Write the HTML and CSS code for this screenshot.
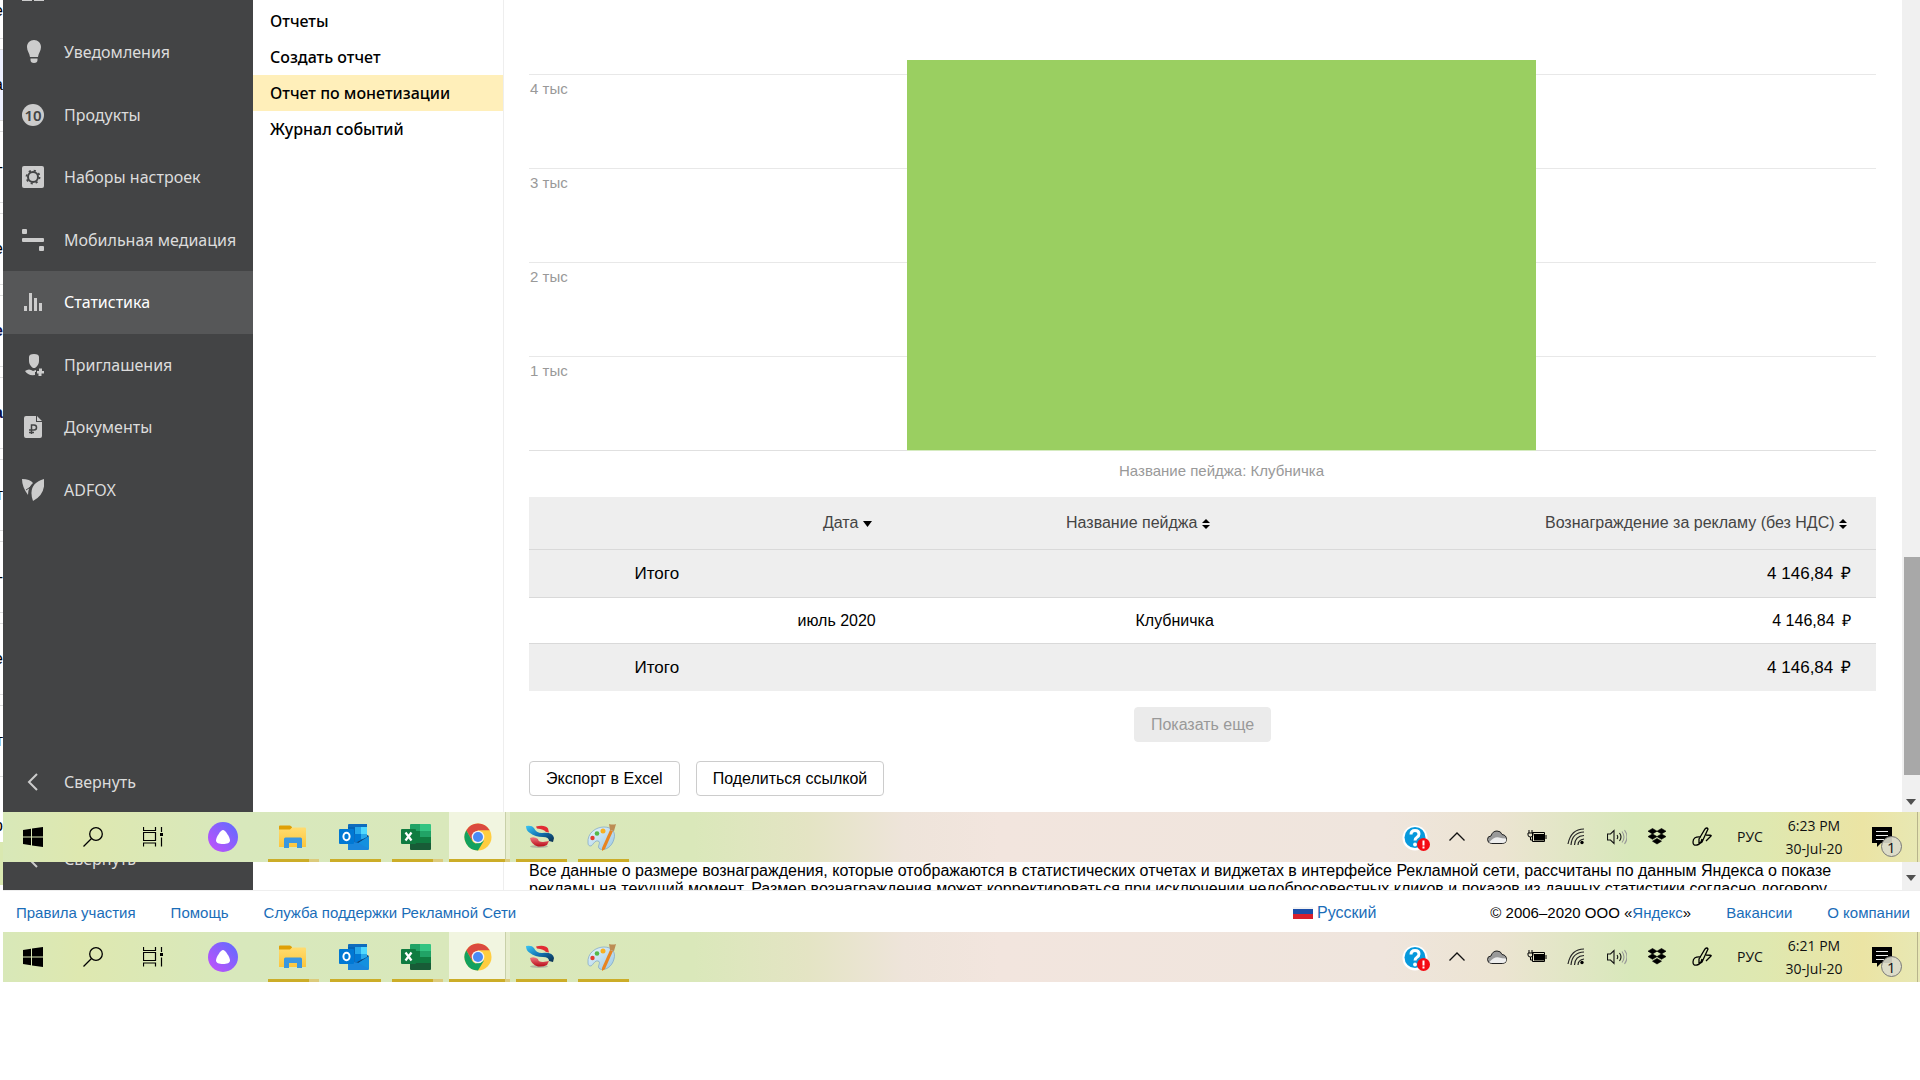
FILE: index.html
```html
<!DOCTYPE html>
<html lang="ru">
<head>
<meta charset="utf-8">
<title>Отчет по монетизации</title>
<link rel="stylesheet" href="styles.css">
</head>
<body>
<svg class="sprite" aria-hidden="true">
  <defs>
    <linearGradient id="g-alice" x1="0" y1="1" x2="1" y2="0"><stop offset="0" stop-color="#c750fa"/><stop offset="1" stop-color="#5b6cff"/></linearGradient>
    <linearGradient id="g-folder" x1="0" y1="0" x2="0" y2="1"><stop offset="0" stop-color="#ffdc70"/><stop offset="1" stop-color="#fcc63c"/></linearGradient>
    <linearGradient id="g-blue" x1="0" y1="0" x2="1" y2="1"><stop offset="0" stop-color="#3cc8f4"/><stop offset=".5" stop-color="#1272b4"/><stop offset="1" stop-color="#0a2c4a"/></linearGradient>
    <linearGradient id="g-red" x1="0" y1="0" x2="0" y2="1"><stop offset="0" stop-color="#f07880"/><stop offset="1" stop-color="#b80c18"/></linearGradient>
    <linearGradient id="g-pal" x1="0" y1="0" x2="1" y2="1"><stop offset="0" stop-color="#e8f6fc"/><stop offset="1" stop-color="#9cc8e4"/></linearGradient>
  </defs>
  <symbol id="win" viewBox="0 0 20 20"><path d="M0 3l8-1.200v7.700H0zM9 1.600L20 0v9.500H9zM0 10.500h8v7.700L0 17zM9 10.500h11V20L9 18.400z"/></symbol>
  <symbol id="search" viewBox="0 0 20 20"><g fill="none" stroke="#000" stroke-width="1.300"><circle cx="13" cy="7" r="6.300"/><path d="M8.500 11.500L.5 19.500"/></g></symbol>
  <symbol id="tasks" viewBox="0 0 20 20"><path d="M.5 0v3.500h12V0M.5 19.500V16h12v3.500M.5 5.500h12v8H.5zM18.500 0v5M18.500 10.500v9" fill="none" stroke="#000" stroke-width="1.200"/><path d="M17 6h3v3h-3z"/></symbol>
  <symbol id="alice" viewBox="0 0 30 30"><circle cx="15" cy="15" r="15" fill="url(#g-alice)"/><path d="M15 8c2.500 0 7 7.500 7 10.500 0 2.500-3 3.500-7 3.500s-7-1-7-3.500C8 15.500 12.500 8 15 8z" fill="#fff"/></symbol>
  <symbol id="folder" viewBox="0 0 28 24"><path d="M1 1.500Q1 .5 2 .5h10l2 1.500v3H1z" fill="#dfa006"/><path d="M1 4.500h11l2-2h13q1 0 1 1v18.500H1z" fill="url(#g-folder)"/><path d="M6 23v-9q0-1.500 1.500-1.500h15q1.500 0 1.500 1.500v9h-5v-5h-8v5z" fill="#3b97e0"/></symbol>
  <symbol id="outlook" viewBox="0 0 30 28"><path d="M9 2q0-1 1-1h18v19H9z" fill="#0f6cbd"/><path d="M9 4h7v7H9z" fill="#0364b8"/><path d="M16 4h6v7h-6z" fill="#28a8ea"/><path d="M22 4h6v7h-6z" fill="#50d9ff"/><path d="M16 11h6v8h-6z" fill="#0078d4"/><path d="M22 11h6v5h-6z" fill="#28a8ea"/><path d="M30 14v12q0 1-1 1H9V17l9 3z" fill="#1a86dc"/><path d="M30 13L18 19l12 7z" fill="#1490df"/><path d="M28 12l2 1-11 7-1-1 10-5z" fill="#0a3a70"/><rect y="6" width="15" height="15" rx="1" fill="#0078d4"/><ellipse cx="7.500" cy="13.500" rx="3.100" ry="3.800" fill="none" stroke="#fff" stroke-width="2"/></symbol>
  <symbol id="excel" viewBox="0 0 30 28"><path d="M9 2q0-1 1-1h9v7H9z" fill="#21a366"/><path d="M19 1h10q1 0 1 1v8H19z" fill="#33c481"/><path d="M9 8h10v7H9z" fill="#107c41"/><path d="M19 8h11v6H19z" fill="#21a366"/><path d="M9 14h21v6H9z" fill="#107c41"/><path d="M9 20h21v6q0 1-1 1H10q-1 0-1-1z" fill="#185c37"/><rect y="6" width="15" height="15" rx="1" fill="#107c41"/><path d="M4.500 9.500l6 8M10.500 9.500l-6 8" stroke="#fff" stroke-width="2.200"/></symbol>
  <symbol id="chrome" viewBox="0 0 28 28"><circle cx="14" cy="14" r="13.500" fill="#ffcd40"/><path d="M2.300 7.200A13.500 13.500 0 0 1 25.700 7.200H14L8 17.500z" fill="#db4a3f"/><path d="M2.300 7.200L8 17.400q2 3.400 6 3.400L14 27.500A13.500 13.500 0 0 1 2.300 7.200z" fill="#12a15e"/><path d="M20 17.500L14 27.500l-2-7z" fill="#12a15e"/><circle cx="14" cy="14" r="6.300" fill="#f4f4f4"/><circle cx="14" cy="14" r="5" fill="#4a8af4"/></symbol>
  <symbol id="ess" viewBox="0 0 28 24"><ellipse cx="13" cy="21.500" rx="9" ry="1.500" fill="#888" opacity=".5"/><path d="M10 1.500q9-2 12 2l1 4-3-.5q-2-3-9-3.500z" fill="#e22c34"/><path d="M0 1q6-1 8 2 2 5 8 5 11-1 12 5l-1 4-4-1q0-4-6-4-8 0-13-4Q0 6 0 1z" fill="url(#g-blue)"/><path d="M4 13q4-2 8 1 0 3 5 3l6-1-2 4q-4 2-9 1.500-7-2-8-8.500z" fill="url(#g-red)"/></symbol>
  <symbol id="paint" viewBox="0 0 30 28"><path d="M1 20C0 10 9 4 17 4c8 0 12 5 10 12-2 8-9 12-14 10-4-2 2-7-2-8-3-1-5 4-7 5-2 0-3-1-3-3z" fill="url(#g-pal)" stroke="#7aa4c4" stroke-width=".7"/><circle cx="5.500" cy="15" r="2.200" fill="#e23c34"/><circle cx="10" cy="10.500" r="2.300" fill="#54b848"/><circle cx="16" cy="8" r="2.500" fill="#f8b020"/><path d="M23 7l3 1-8 18-3 2 0-3z" fill="#e88420"/><path d="M22 1q4 1 7 0l-2 7-4-1z" fill="#bc8c54"/></symbol>
  <symbol id="help" viewBox="0 0 28 28"><circle cx="13" cy="13" r="12.500" fill="#fff"/><circle cx="13" cy="12.500" r="10.500" fill="#0899dc"/><path d="M9 9.500q0-4 4-4t4 3.500q0 2-2 3.200t-2 3.300" fill="none" stroke="#fff" stroke-width="3"/><circle cx="13" cy="19.500" r="1.900" fill="#fff"/><circle cx="21.500" cy="19.500" r="6.500" fill="#f40c14"/><path d="M20.500 15.500h2v5h-2zM20.500 21.500h2v2h-2z" fill="#fff"/></symbol>
  <symbol id="up" viewBox="0 0 20 20"><path d="M2.500 13.500L10 6l7.500 7.500" fill="none" stroke="#111" stroke-width="1.300"/></symbol>
  <symbol id="cloud" viewBox="0 0 20 20"><path d="M4.500 16.500Q.5 16 .5 12.500T4 9q1.500-5 6-5 4 0 5 3.500 4.500.5 4.500 5 0 4-4 4z" fill="#9a9a9a" stroke="#222"/><path d="M2 15.500q5-6 10-5 3 1 7 1 1 4.500-4 4.500H5z" fill="#eee"/></symbol>
  <symbol id="battery" viewBox="0 0 20 20"><path d="M5.500 5.500h12v9h-12zM19 8v4" fill="none" stroke="#000"/><path d="M7 7h10v6.500H7z"/><path d="M2 3v3M5 3v3M1 6h5v2q0 2-2.500 2T1 8zM3.500 10v3H6" fill="none" stroke="#000"/></symbol>
  <symbol id="wifi" viewBox="0 0 20 20"><g fill="none" stroke="#222" stroke-width="1.200"><path d="M11 18q0-5 6-6M7.500 18Q8 9 17 8.500M4 18Q5 5.500 17 5M1 17Q4 2 17 2" /></g><circle cx="15" cy="15.500" r="1.700"/></symbol>
  <symbol id="volume" viewBox="0 0 20 20"><g fill="none" stroke="#111" stroke-width="1.100"><path d="M.5 7h3L7 3.500v13L3.500 13h-3zM10 8q1.500 2 0 4M12.500 6q3 4 0 8"/><path d="M15 4.500q4 5.500 0 11M17.500 3q5 7 0 14" stroke="#999"/></g></symbol>
  <symbol id="dropbox" viewBox="0 0 20 20"><path d="M5.500 1.500l4.500 2.700-4.500 2.700L1 4.200zM14.500 1.500L19 4.200l-4.500 2.700L10 4.200zM5.500 6.900L10 9.600l-4.500 2.700L1 9.600zM14.500 6.900L19 9.600l-4.500 2.700L10 9.600zM10 11.500l4.500 2.700-4.500 2.800-4.500-2.800z" stroke="#000" stroke-width=".6"/></symbol>
  <symbol id="pen" viewBox="0 0 20 20"><path d="M7 12L13 2q2-2 3 0L10 15l-3 2zM9 10q-8-1-8 5 0 4 4 3 4-1 5-6M14 8q6 0 5 1l-5 5" fill="none" stroke="#000" stroke-width="1.300"/></symbol>
  <symbol id="note" viewBox="0 0 32 32"><path d="M0 1h20v16H9l-4 4v-4H0z"/><path d="M4 5.500h12M4 9.500h12M4 13.500h8" stroke="#eee"/><circle cx="19.500" cy="20.500" r="10" fill="#dcdacb" fill-opacity=".9" stroke="#777"/></symbol>
</svg>

<div class="desktop">
  <div class="sliver" aria-hidden="true">
    <div class="cell">е</div><div class="cell tint">а</div><div class="cell">-</div><div class="cell">е</div><div class="cell bold">е</div><div class="cell bold">а</div><div class="cell">т</div><div class="cell">-</div><div class="cell">е</div><div class="cell">т</div><div class="cell last">р</div>
  </div>

  <div class="stack">
    <div class="window">
      <nav class="sidebar" aria-label="Разделы">
        <div class="peek"><svg width="22" height="2"><path d="M0 0h10v1H0zM12 0h10v1H12z" fill="#ccc"/></svg></div>
        <div class="menu">
          <a class="item" href="#"><svg viewBox="0 0 22 24"><path d="M12 0c4 0 7 3 7 7 0 4-2.500 6-3 10H8C7.500 13 5 11 5 7c0-4 3-7 7-7zM8.500 18.500h7V20q0 3-3.500 3t-3.500-3z"/></svg>Уведомления</a>
          <a class="item" href="#"><span class="ten">10</span>Продукты</a>
          <a class="item" href="#"><svg viewBox="0 0 22 24"><rect y="1" width="22" height="22" rx="2"/><g fill="none" stroke="#434445"><circle cx="11" cy="12" r="5" stroke-width="2"/><circle cx="11" cy="12" r="6.500" stroke-dasharray="2.100 3" stroke-width="1.800"/></g></svg>Наборы настроек</a>
          <a class="item" href="#"><svg viewBox="0 0 22 24"><rect y="1" width="5" height="5" rx="1"/><rect y="10" width="22" height="4" rx="1"/><rect x="17" y="18" width="5" height="5" rx="1"/></svg>Мобильная медиация</a>
          <a class="item active" href="#"><svg viewBox="0 0 22 24"><path d="M2 16h3v5H2zM7 3h3v18H7zM12 8h3v13h-3zM17 13h3v8h-3z"/></svg>Статистика</a>
          <a class="item" href="#"><svg viewBox="0 0 22 24"><path d="M7 4q0-3 5-3t5 3v4q0 4-4 7h-2q-4-3-4-7zM3 18q4-3 8 0l3-1v2h-1v3q-7 1-10-4zM15 18h2v-2.500h3V18h2v2.500h-2.500V23h-3v-2.500H15z"/></svg>Приглашения</a>
          <a class="item" href="#"><svg viewBox="0 0 22 24"><path d="M4 1h10v6h6v14q0 2-2 2H4q-2 0-2-2V3q0-2 2-2zM15 1l5 5h-5z"/><path d="M9.500 19v-9H12q2.500 0 2.500 2.500T12 15H7M7 17.500h5" fill="none" stroke="#434445" stroke-width="1.500"/></svg>Документы</a>
          <a class="item" href="#"><svg viewBox="0 0 22 24"><path d="M0 1q8 0 11 4-5 4-5 12Q0 9 0 1zM22 1q2 15-11 22Q5 6 22 1z"/><path d="M4 12l6-4-1 3" fill="none" stroke="#434445"/></svg>ADFOX</a>
        </div>
        <a class="item collapse" href="#"><svg viewBox="0 0 22 24"><path d="M15 4l-8 8 8 8" fill="none" stroke="#ccc" stroke-width="2"/></svg>Свернуть</a>
      </nav>
      <nav class="subnav" aria-label="Статистика">
        <a href="#">Отчеты</a>
        <a href="#">Создать отчет</a>
        <a class="current" href="#">Отчет по монетизации</a>
        <a href="#">Журнал событий</a>
      </nav>
      <main class="content">
        <div class="chart">
          <div class="lines"><span>4 тыс</span><span>3 тыс</span><span>2 тыс</span><span>1 тыс</span></div>
          <div class="plot"><div class="bar"></div></div>
        </div>
        <p class="caption">Название пейджа: Клубничка</p>
        <table class="report">
          <colgroup><col class="c-total"><col class="c-date"><col class="c-name"><col></colgroup>
          <thead><tr><th></th><th>Дата <svg width="9" height="6"><path d="M0 0h9L4.500 6z"/></svg></th><th>Название пейджа <svg width="8" height="10"><path d="M0 4l4-4 4 4zM0 6h8l-4 4z"/></svg></th><th>Вознаграждение за рекламу (без НДС) <svg width="8" height="10"><path d="M0 4l4-4 4 4zM0 6h8l-4 4z"/></svg></th></tr></thead>
          <tbody>
            <tr class="total"><td>Итого</td><td></td><td></td><td>4 146,84 <span class="rub">₽</span></td></tr>
            <tr><td></td><td>июль 2020</td><td>Клубничка</td><td>4 146,84 <span class="rub">₽</span></td></tr>
            <tr class="total"><td>Итого</td><td></td><td></td><td>4 146,84 <span class="rub">₽</span></td></tr>
          </tbody>
        </table>
        <div class="more"><button class="btn muted" type="button" disabled>Показать еще</button></div>
        <div class="actions"><button class="btn" type="button">Экспорт в Excel</button><button class="btn" type="button">Поделиться ссылкой</button></div>
      </main>
      <div class="scroll" aria-hidden="true"><div class="thumb"></div><svg width="10" height="6"><path d="M0 0h10L5 6z"/></svg></div>
    </div>

    <div class="taskbar">
      <div class="apps">
        <button class="sys" aria-label="Start"><svg width="20" height="20"><use href="#win"/></svg></button>
        <button class="sys" aria-label="Search"><svg width="20" height="20"><use href="#search"/></svg></button>
        <button class="sys" aria-label="Task view"><svg width="20" height="20"><use href="#tasks"/></svg></button>
        <button class="sys wide" aria-label="Alice"><svg width="30" height="30"><use href="#alice"/></svg></button>
        <button class="app multi" aria-label="Explorer"><svg width="28" height="24"><use href="#folder"/></svg></button>
        <button class="app" aria-label="Outlook"><svg width="30" height="28"><use href="#outlook"/></svg></button>
        <button class="app multi" aria-label="Excel"><svg width="30" height="28"><use href="#excel"/></svg></button>
        <button class="app open" aria-label="Chrome"><svg width="28" height="28"><use href="#chrome"/></svg></button>
        <button class="app" aria-label="Snagit"><svg width="28" height="24"><use href="#ess"/></svg></button>
        <button class="app" aria-label="Paint"><svg width="30" height="28"><use href="#paint"/></svg></button>
      </div>
      <div class="tray">
        <span class="ic"><svg width="28" height="28"><use href="#help"/></svg></span><span class="ic"><svg width="20" height="20"><use href="#up"/></svg></span><span class="ic"><svg width="20" height="20"><use href="#cloud"/></svg></span><span class="ic"><svg width="20" height="20"><use href="#battery"/></svg></span><span class="ic"><svg width="20" height="20"><use href="#wifi"/></svg></span><span class="ic"><svg width="20" height="20"><use href="#volume"/></svg></span><span class="ic"><svg width="20" height="20"><use href="#dropbox"/></svg></span><span class="ic pen"><svg width="20" height="20"><use href="#pen"/></svg></span>
        <span class="lang">РУС</span>
        <span class="clock"><span>6:23 PM</span><span>30-Jul-20</span></span>
        <span class="notes"><svg width="32" height="32"><use href="#note"/></svg><b>1</b></span>
      </div>
    </div>

    <div class="window strip">
      <div class="sidebar"><a class="item collapse" href="#"><svg viewBox="0 0 22 24"><path d="M15 4l-8 8 8 8" fill="none" stroke="#ccc" stroke-width="2"/></svg>Свернуть</a></div>
      <div class="subnav"></div>
      <div class="content"><p class="note">Все данные о размере вознаграждения, которые отображаются в статистических отчетах и виджетах в интерфейсе Рекламной сети, рассчитаны по данным Яндекса о показе рекламы на текущий момент. Размер вознаграждения может корректироваться при исключении недобросовестных кликов и показов из данных статистики согласно договору.</p></div>
      <div class="scroll" aria-hidden="true"><svg width="10" height="6"><path d="M0 0h10L5 6z"/></svg></div>
    </div>

    <footer class="footer">
      <div class="links"><a href="#">Правила участия</a><a href="#">Помощь</a><a href="#">Служба поддержки Рекламной Сети</a></div>
      <a class="locale" href="#"><svg width="20" height="12"><path fill="#f4f4f4" d="M0 0h20v4H0z"/><path fill="#1c4fa8" d="M0 2h20v5H0z"/><path fill="#d8202c" d="M0 7h20v5H0z"/></svg>Русский</a>
      <div class="links"><span>© 2006–2020 ООО «<a href="#">Яндекс</a>»</span><a href="#">Вакансии</a><a href="#">О компании</a></div>
    </footer>

    <div class="taskbar">
      <div class="apps">
        <button class="sys" aria-label="Start"><svg width="20" height="20"><use href="#win"/></svg></button>
        <button class="sys" aria-label="Search"><svg width="20" height="20"><use href="#search"/></svg></button>
        <button class="sys" aria-label="Task view"><svg width="20" height="20"><use href="#tasks"/></svg></button>
        <button class="sys wide" aria-label="Alice"><svg width="30" height="30"><use href="#alice"/></svg></button>
        <button class="app multi" aria-label="Explorer"><svg width="28" height="24"><use href="#folder"/></svg></button>
        <button class="app" aria-label="Outlook"><svg width="30" height="28"><use href="#outlook"/></svg></button>
        <button class="app multi" aria-label="Excel"><svg width="30" height="28"><use href="#excel"/></svg></button>
        <button class="app open" aria-label="Chrome"><svg width="28" height="28"><use href="#chrome"/></svg></button>
        <button class="app" aria-label="Snagit"><svg width="28" height="24"><use href="#ess"/></svg></button>
        <button class="app" aria-label="Paint"><svg width="30" height="28"><use href="#paint"/></svg></button>
      </div>
      <div class="tray">
        <span class="ic"><svg width="28" height="28"><use href="#help"/></svg></span><span class="ic"><svg width="20" height="20"><use href="#up"/></svg></span><span class="ic"><svg width="20" height="20"><use href="#cloud"/></svg></span><span class="ic"><svg width="20" height="20"><use href="#battery"/></svg></span><span class="ic"><svg width="20" height="20"><use href="#wifi"/></svg></span><span class="ic"><svg width="20" height="20"><use href="#volume"/></svg></span><span class="ic"><svg width="20" height="20"><use href="#dropbox"/></svg></span><span class="ic pen"><svg width="20" height="20"><use href="#pen"/></svg></span>
        <span class="lang">РУС</span>
        <span class="clock"><span>6:21 PM</span><span>30-Jul-20</span></span>
        <span class="notes"><svg width="32" height="32"><use href="#note"/></svg><b>1</b></span>
      </div>
    </div>
  </div>
</div>
</body>
</html>
```

FILE: styles.css
```css
* { box-sizing: border-box; }
body { margin: 0; background: #fff; color: #000; font: 16px/18px "Liberation Sans", Arial, sans-serif; }
p { margin: 0; }
a { color: #1a6db8; text-decoration: none; }
button { font: inherit; border: 0; padding: 0; background: none; color: inherit; }
svg { display: block; flex: none; }
.sprite { position: absolute; width: 0; height: 0; }

.desktop { display: grid; grid-template-columns: 3px 1fr; overflow: hidden; }
.stack { display: flex; flex-direction: column; min-width: 0; }

/* Edge of the window lying behind */
.sliver { display: flex; flex-direction: column; gap: 10px; overflow: hidden; height: 885px; }
.cell { flex: none; height: 72px; display: flex; align-items: center; justify-content: flex-end; border: solid #ddd; border-width: 1px 0; }
.cell:first-child { height: 39px; padding-bottom: 16px; border-top: 0; }
.tint { background: #eef1ff; }
.bold { font-weight: bold; color: #10104a; }
.last { height: 98px; padding-bottom: 20px; border: 0; background: linear-gradient(#fff 55px, #d9e8b0 55px); }

.window { display: grid; grid-template-columns: 250px 251px 1fr 18px; min-height: 812px; }
.sidebar { background: #434445; display: flex; flex-direction: column; font-family: "Noto Sans", sans-serif; }
.peek { height: 21px; padding-left: 19px; }
.menu { display: flex; flex-direction: column; height: 500px; }
.item { flex: 1; display: flex; align-items: center; gap: 20px; padding-left: 19px; color: #dcdcdc; white-space: nowrap; }
.item svg { width: 22px; height: 24px; fill: #ccc; }
.active { background: #565758; color: #fff; }
.ten { width: 22px; height: 22px; border-radius: 50%; background: #ccc; color: #434445; font-size: 15px; line-height: 22px; font-weight: 600; text-align: center; }
.collapse { flex: none; height: 60px; margin-top: auto; }

.subnav { border-right: 1px solid #eee; font-family: "Noto Sans", sans-serif; font-weight: 500; padding-top: 3px; }
.subnav a { display: flex; align-items: center; height: 36px; padding-left: 17px; color: #000; }
.subnav .current { background: #ffefba; }

.content { padding: 0 26px 15px 25px; display: flex; flex-direction: column; min-width: 0; }
.chart { display: grid; margin-top: 60px; }
.lines, .plot { grid-area: 1 / 1; }
.lines { padding-top: 14px; font-size: 15px; color: #999; border-bottom: 1px solid #e0e0e0; }
.lines span { display: block; height: 94px; padding: 5px 1px; border-top: 1px solid #e8e8e8; }
.plot { padding-left: 38px; display: flex; justify-content: center; }
.bar { width: 48%; background: #9acf61; border-bottom: 1px solid #d5ebc0; }
.caption { padding-left: 38px; margin: 11px 0 17px; font-size: 15px; color: #999; text-align: center; }

.report { width: 100%; table-layout: fixed; border-collapse: collapse; text-align: right; }
.c-total { width: 13%; }
.c-date { width: 14.6%; }
.c-name { width: 25.1%; }
.report th { height: 52px; padding: 1px 29px 0 0; font-weight: normal; color: #444; background: #eee; white-space: nowrap; }
.report th svg { display: inline-block; vertical-align: middle; fill: #000; }
.report td { height: 46px; padding: 1px 25px 0 0; border-top: 1px solid #d9d9d9; }
.report .total td { height: 48px; background: #eee; font-size: 17px; }
.rub { margin-left: 3px; }

.btn { height: 35px; padding: 0 16px; border: 1px solid #ccc; border-radius: 4px; background: #fff; }
.muted { background: #ebebeb; border-color: #ebebeb; color: #999; }
.more { display: flex; justify-content: center; margin: 16px 0 19px; }
.actions { display: flex; gap: 16px; }

.scroll { background: #f0f0f0; display: flex; flex-direction: column; align-items: center; justify-content: flex-end; gap: 24px; padding-bottom: 7px; }
.scroll svg { fill: #505050; }
.thumb { width: 16px; height: 218px; background: #a8a8a8; align-self: flex-end; }

.strip { min-height: 0; height: 28px; overflow: hidden; }
.strip .sidebar { height: 28px; justify-content: flex-end; }
.strip .collapse { margin: 0; height: 62px; }
.strip .content { height: 28px; padding-bottom: 0; }
.strip .scroll { padding-bottom: 9px; }

.footer { display: flex; align-items: center; height: 42px; padding: 2px 10px 0 13px; border-top: 1px solid #eee; font-size: 15px; white-space: nowrap; }
.links { display: flex; gap: 35px; }
.locale { display: flex; align-items: center; gap: 4px; margin-left: auto; margin-right: 114px; font-size: 16px; }

.taskbar { display: flex; justify-content: space-between; height: 50px; background: linear-gradient(90deg, #d8e8b8 0, #dee8b0 4%, #d8e8bc 12%, #dae8ba 36%, #e4e4c4 42%, #eee4da 47%, #f2e5de 52%, #efe5dd 72%, #ece4d2 78%, #d8e8ba 85%, #dfe8b0 92%, #ebe4a4 97%, #e8e8b4 100%); }
.apps, .tray { display: flex; }
.apps button { display: flex; align-items: center; justify-content: center; }
.sys { width: 60px; }
.sys.wide { width: 79px; }
.apps .app { width: 62px; padding: 0 3px 0 0; border: solid transparent; border-width: 0 5px 0 6px; background: linear-gradient(#ccad28, #ccad28) bottom / 100% 3px no-repeat padding-box; }
.apps .multi { background: linear-gradient(90deg, #ccad28 41px, #dccb7c 41px) bottom / 100% 3px no-repeat padding-box; }
.apps .open { border-width: 0 0 0 1px; background: linear-gradient(90deg, #ccad28 56px, #dccb7c 56px) bottom / 100% 3px no-repeat padding-box, linear-gradient(90deg, #f1f5e0 56px, #c8d0a8 56px, #c8d0a8 57px, #e6edcc 57px) padding-box; }

.tray { font-family: "Open Sans", sans-serif; font-size: 15px; color: #111; border-right: 1px solid #b8b48c; margin-right: 2px; }
.ic { width: 40px; display: flex; align-items: center; justify-content: center; }
.ic:first-child { padding: 4px 2px 0 0; }
.ic.pen { width: 50px; }
.lang { width: 46px; align-self: center; text-align: center; font-size: 14px; }
.clock { width: 82px; display: flex; flex-direction: column; justify-content: center; text-align: center; font-size: 14px; line-height: 23px; }
.notes { width: 62px; padding: 10px 0 0 17px; display: grid; align-items: center; }
.notes svg, .notes b { grid-area: 1 / 1; }
.notes b { font-weight: 400; padding: 9px 0 0 15px; }
```
